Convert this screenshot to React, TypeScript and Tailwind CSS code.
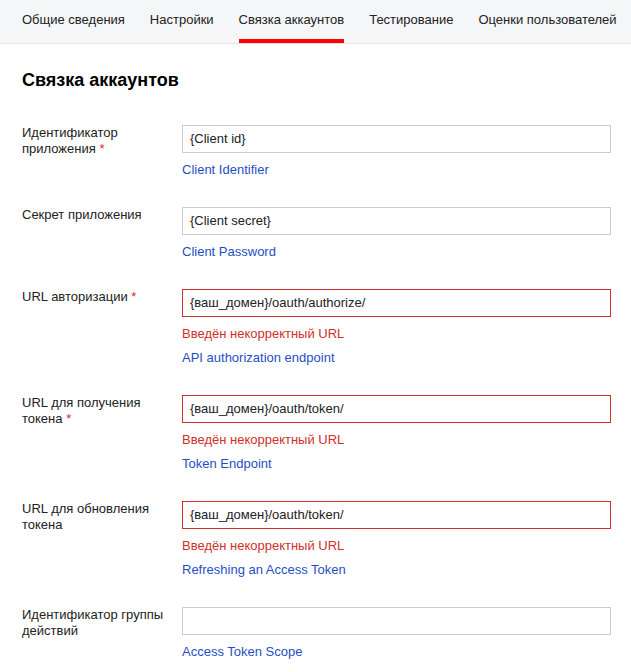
import React from "react";

const tabs = ["Общие сведения", "Настройки", "Связка аккаунтов", "Тестирование", "Оценки пользователей"];

type Field = {
  label: string;
  required?: boolean;
  value: string;
  error?: string;
  help: string;
};

const fields: Field[] = [
  { label: "Идентификатор приложения", required: true, value: "{Client id}", help: "Client Identifier" },
  { label: "Секрет приложения", value: "{Client secret}", help: "Client Password" },
  { label: "URL авторизации", required: true, value: "{ваш_домен}/oauth/authorize/", error: "Введён некорректный URL", help: "API authorization endpoint" },
  { label: "URL для получения токена", required: true, value: "{ваш_домен}/oauth/token/", error: "Введён некорректный URL", help: "Token Endpoint" },
  { label: "URL для обновления токена", value: "{ваш_домен}/oauth/token/", error: "Введён некорректный URL", help: "Refreshing an Access Token" },
  { label: "Идентификатор группы действий", value: "", help: "Access Token Scope" },
];

export default function App() {
  return (
    <div className="min-h-[672px] bg-white text-[13px] leading-4 text-[#222]" style={{ fontFamily: '"Liberation Sans", Arial, sans-serif' }}>
      <div className="flex h-[44px] gap-[25px] border-b border-[#e6e6e6] bg-[#f5f6f7] pl-[22px]">
        {tabs.map((t, i) => (
          <div key={t} className="relative flex items-center pb-[3px]">
            <span className="whitespace-nowrap">{t}</span>
            {i === 2 && <div className="absolute bottom-[0px] left-0 right-0 h-[4px] bg-[#ff0000]" />}
          </div>
        ))}
      </div>
      <div className="pl-[22px] pr-[20px]">
        <h1 className="mt-[26px] text-[18px] font-bold leading-5 text-black">Связка аккаунтов</h1>
        <div className="mt-[35px] flex flex-col gap-[29px]">
          {fields.map((f) => (
            <div key={f.label} className="flex">
              <div className="w-[150px] shrink-0 pr-[4px]">
                {f.label}
                {f.required && <span className="text-[#d0302a]">{"\u00a0*"}</span>}
              </div>
              <div className="ml-[10px] flex flex-1 flex-col">
                <div
                  className={`flex h-[28px] items-center border px-[7px] ${f.error ? "border-[#d0302a]" : "border-[#cccccc]"}`}
                >
                  <span className="text-[#222]">{f.value}</span>
                </div>
                {f.error && <div className="mt-[9px] text-[#d0302a]">{f.error}</div>}
                <div className={`${f.error ? "mt-[8px]" : "mt-[9px]"} text-[#1f4fc4]`}>{f.help}</div>
              </div>
            </div>
          ))}
        </div>
      </div>
    </div>
  );
}
